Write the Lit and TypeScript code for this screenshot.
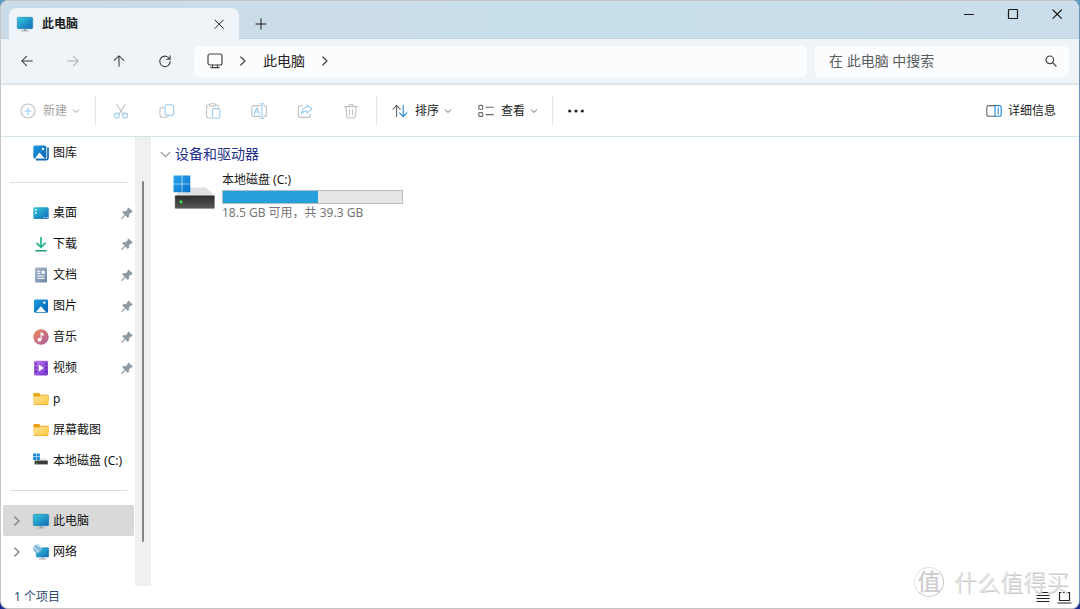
import { LitElement, html, svg, css, nothing } from "lit";
import { customElement, property, state } from "lit/decorators.js";
import { classMap } from "lit/directives/class-map.js";

const pc = svg`
  <rect x="0.3" y="1.3" width="15.4" height="11.4" rx="1.2" fill="url(#screen)" stroke="#1c7fae" stroke-width="0.6"/>
  <path d="M7 13h2v2H7z" fill="#9aa4ab"/><path d="M4.5 14.9h7" stroke="#9aa4ab" stroke-width="1"/>`;

const pictures: Record<string, unknown> = {
  pc,
  gallery: svg`
    <path d="M3 14.6h10.2a1.8 1.8 0 0 0 1.8-1.8V2.5" fill="none" stroke="#1468b3" stroke-width="1.7"/>
    <rect x="0.3" y="0.5" width="13" height="13" rx="1.5" fill="url(#sky)"/>
    <path d="M2 13.2 6.6 7.4 11.6 13.2z" fill="#fff"/><circle cx="10" cy="4" r="1.2" fill="#fff"/>`,
  desktop: svg`
    <rect x="0.3" y="2.3" width="15.4" height="11.6" rx="1.2" fill="url(#screen)"/>
    <path d="M2 4.3h1.6v1.5H2zM2 7.2h1.6v1.5H2z" fill="#fff"/>
    <path d="M10.5 12.6h1M12.3 12.6h1M14 12.6h1" stroke="#fff" stroke-width="0.8"/>`,
  download: svg`
    <path d="M8 1v10M3.4 6.8 8 11.4l4.6-4.6" fill="none" stroke="#26b394" stroke-width="1.7"/>
    <path d="M2.4 14.8h11.2" stroke="#1c9c84" stroke-width="1.6"/>`,
  document: svg`
    <rect x="2" y="0.6" width="12" height="14.8" rx="1.2" fill="url(#paper)"/>
    <path d="M4.4 4.3h3M4.4 6.4h3M4.4 9h7.4M4.4 11.4h7.4" stroke="#fff" stroke-width="1"/>
    <path d="M8.8 3.8h3v3h-3z" fill="#fff"/>`,
  image: svg`
    <rect x="1" y="1.4" width="14" height="13.4" rx="1.3" fill="url(#sky)"/>
    <path d="M3 14 7.8 8.2 13 14z" fill="#fff"/><circle cx="11.3" cy="4.6" r="1.2" fill="#fff"/>`,
  music: svg`
    <circle cx="8" cy="8" r="7.7" fill="url(#note)"/>
    <circle cx="6.5" cy="10.7" r="1.9" fill="#fff"/>
    <path d="M7.6 10.7V3.2l3 1.6v2.2L8.6 6v4.7z" fill="#fff"/>`,
  video: svg`
    <rect x="1" y="0.8" width="14" height="14.6" rx="1.3" fill="url(#film)"/>
    <path d="M2.8 3v11M13.2 3v11" stroke="#4e2391" stroke-width="1.6" stroke-dasharray="1.6 2.2"/>
    <path d="M5.8 4.6 11 8.1 5.8 11.6z" fill="#fff"/>`,
  folder: svg`
    <path d="M0.4 3.2a1.2 1.2 0 0 1 1.2-1.2h4.5l1.5 1.7h6.8a1.2 1.2 0 0 1 1.2 1.2v5H0.4z" fill="#e9a416"/>
    <path d="M0.4 5.4h6L7.8 4.6h6.6a1.2 1.2 0 0 1 1.2 1.2v6.8a1.3 1.3 0 0 1-1.3 1.3H1.7a1.3 1.3 0 0 1-1.3-1.3z" fill="url(#manila)"/>
    <path d="M0.8 13.6h14.4" stroke="#e6a829" stroke-width="0.7"/>`,
  drive: svg`
    <path d="M5 5.4h8l2 3H3z" fill="#e2e3e6"/>
    <path d="M1.6 7.6h13.2v3.8H1.6z" fill="#3b3b3b"/><path d="M3 9.4h1.4v1H3z" fill="#47e04c"/>
    <path d="M0.2 0.4h3v3h-3zM3.8 0.4h3v3h-3zM0.2 4h3v3h-3zM3.8 4h3v3h-3z" fill="#1585d8"/>`,
  network: svg`
    <rect x="3.3" y="3.8" width="12.4" height="9.2" rx="1" fill="url(#screen)" stroke="#1c7fae" stroke-width="0.6"/>
    <path d="M8.6 13.2h2v1.6h-2z" fill="#9aa4ab"/><path d="M6.2 15h6.8" stroke="#9aa4ab" stroke-width="1"/>
    <circle cx="4.4" cy="4.6" r="4.2" fill="#7fb8d8"/>
    <path d="M1.2 3.4C3 4 2.6 5.6 4 6.2s.4 2 1 2.2M4.6.6C4 2 5.6 2.6 6.6 2.2S7.4 4 8.4 4.2" fill="none" stroke="#d9edf6" stroke-width="1.1"/>`,
};

const glyphs: Record<string, unknown> = {
  back: svg`<path d="M14 8H2.2M7.4 2.6 2 8l5.4 5.4"/>`,
  forward: svg`<path d="M2 8h11.8M8.6 2.6 14 8l-5.4 5.4"/>`,
  up: svg`<path d="M8 14V2.2M2.6 7.4 8 2l5.4 5.4"/>`,
  refresh: svg`<path d="M13.3 5.6A6 6 0 1 0 14 8.4M13.8 2v4h-4"/>`,
  monitor: svg`<rect x="1" y="1" width="14" height="11" rx="2"/><path d="M5.5 12v2.4M10.5 12v2.4M3.8 14.6h8.4"/>`,
  right: svg`<path d="M5.8 4 10 8l-4.2 4"/>`,
  down: svg`<path d="M4.4 6.4 8 9.8l3.6-3.4"/>`,
  expand: svg`<path d="M1.6 4.8 8 11.2l6.4-6.4"/>`,
  close: svg`<path d="M4 4l8.4 8.4M12.4 4 4 12.4"/>`,
  plus: svg`<path d="M8 3v10M3 8h10"/>`,
  minimize: svg`<path d="M3.5 8.5h9"/>`,
  maximize: svg`<rect x="3.5" y="3.5" width="9" height="9" rx="0.6"/>`,
  search: svg`<circle cx="6.8" cy="6.8" r="3.8"/><path d="M9.6 9.6 13 13"/>`,
  create: svg`<circle cx="8" cy="8" r="7"/><path class="accent" d="M8 4.8v6.4M4.8 8h6.4"/>`,
  cut: svg`<path d="M3.6 1 10 11M12.4 1 6 11"/><circle class="accent" cx="3.9" cy="12.6" r="2.5"/><circle class="accent" cx="12.1" cy="12.6" r="2.5"/>`,
  copy: svg`<path d="M4.4 4.6H3a2 2 0 0 0-2 2v5.6a2 2 0 0 0 2 2h4.4a2 2 0 0 0 2-1.6"/><rect class="accent" x="6" y="1.8" width="8.6" height="10.4" rx="2"/>`,
  paste: svg`<path d="M6 15H3.2a1.6 1.6 0 0 1-1.6-1.6V3.6A1.6 1.6 0 0 1 3.2 2h1.3M10.5 2h1.3a1.6 1.6 0 0 1 1.6 1.6V4"/><rect x="4.5" y="0.8" width="6" height="2.4" rx="1.1"/><rect class="accent" x="7.4" y="5.6" width="7.4" height="9.6" rx="1.4"/>`,
  rename: svg`<path d="M9 2.6H2.8A2 2 0 0 0 .8 4.6v6.8a2 2 0 0 0 2 2H9M12.8 2.6h.6a2 2 0 0 1 2 2v6.8a2 2 0 0 1-2 2h-.6"/><path class="accent" d="M3.2 11 5.8 4.6 8.4 11M4.1 9h3.4M10.9 1v14M9.2.8h3.4M9.2 15.2h3.4"/>`,
  share: svg`<path d="M5.6 2.8H3.4a2 2 0 0 0-2 2v7.6a2 2 0 0 0 2 2h7.8a2 2 0 0 0 2-2v-1"/><path class="accent" d="M10 1.8 15 6l-5 4.2V7.8C7.4 7.8 5.8 8.8 4.6 10.6 4.8 6.8 6.8 4.4 10 4.2z"/>`,
  trash: svg`<path d="M1.4 3.6h13.2M5.8 3.4a2.2 2.2 0 0 1 4.4 0M2.8 3.8l.9 9.6a1.8 1.8 0 0 0 1.8 1.6h5a1.8 1.8 0 0 0 1.8-1.6l.9-9.6M6.5 6.8v5M9.5 6.8v5"/>`,
  sort: svg`<path d="M4.6 13.4V2.6M1 6.2l3.6-3.8 3.6 3.8"/><path class="accent" d="M11.2 2.4v11M7.6 9.8l3.6 3.8 3.6-3.8"/>`,
  view: svg`<rect x="0.8" y="2.4" width="4" height="3.8" rx="1"/><rect x="0.8" y="9.6" width="4" height="3.8" rx="1"/><path d="M8 4.2h7.4M8 11.6h7.4"/>`,
  details: svg`<path d="M9 2.6H2.8a2 2 0 0 0-2 2v6.6a2 2 0 0 0 2 2H9"/><path class="accent" d="M9 2.6h4.2a2 2 0 0 1 2 2v6.6a2 2 0 0 1-2 2H9zM12.2 5v1.4M12.2 7.4v1.2M12.2 9.6V11"/>`,
  more: svg`<g fill="currentColor" stroke="none"><circle cx="1.7" cy="8" r="1.6"/><circle cx="8" cy="8" r="1.6"/><circle cx="14.3" cy="8" r="1.6"/></g>`,
  pin: svg`<path d="M9.6 1.6 14.6 6.4l-1.2 1.1-1.2.1-2 2 .1 2.7-1.4 1.3-2.7-2.7-3.9 3.9-.9-.1.1-.9 3.8-3.9L2.6 7.2 4 5.8l2.6.1 2-2 .1-1.3z" fill="currentColor" stroke="none"/>`,
  rows: svg`<path d="M2 3.5h12M2 6.5h12M2 9.5h12M2 12.5h12"/>`,
  tiles: svg`<path d="M5 3.5H3.5v8h10v-8H12M7.5 3.5h2M2 14h13"/>`,
};

@customElement("ui-glyph")
class UiGlyph extends LitElement {
  @property() name = "";
  static styles = css`
    :host { display: flex; flex: none; width: 16px; height: 16px; }
    svg { width: 100%; height: 100%; overflow: visible; fill: none; stroke: currentColor;
      stroke-width: var(--stroke, 1); stroke-linecap: round; stroke-linejoin: round; }
    .accent { stroke: var(--accent, currentColor); }
  `;
  render() {
    return html`<svg viewBox="0 0 16 16" aria-hidden="true">${glyphs[this.name]}</svg>`;
  }
}

@customElement("ui-picture")
class UiPicture extends LitElement {
  @property() name = "";
  static styles = css`
    :host { display: flex; flex: none; width: 16px; height: 16px; }
    svg { width: 100%; height: 100%; overflow: visible; }
  `;
  render() {
    return html`<svg viewBox="0 0 16 16" aria-hidden="true">
      <defs>
        <linearGradient id="screen" x2="1" y2="1"><stop stop-color="#35cbdc"/><stop offset="1" stop-color="#1169b8"/></linearGradient>
        <linearGradient id="sky" x2="1" y2="1"><stop stop-color="#1b9ce0"/><stop offset="1" stop-color="#0c62b4"/></linearGradient>
        <linearGradient id="paper" x2="1" y2="1"><stop stop-color="#a9bace"/><stop offset="1" stop-color="#6a84a8"/></linearGradient>
        <linearGradient id="note" x2="1" y2="1"><stop stop-color="#ee8a5a"/><stop offset="1" stop-color="#a95b9f"/></linearGradient>
        <linearGradient id="film" x2="1" y2="1"><stop stop-color="#bd79ea"/><stop offset="1" stop-color="#7434cf"/></linearGradient>
        <linearGradient id="manila" x2="1" y2="1"><stop stop-color="#ffe59a"/><stop offset="1" stop-color="#fcc63c"/></linearGradient>
      </defs>
      ${pictures[this.name]}
    </svg>`;
  }
}

interface Place { name: string; icon: string; pinned?: boolean; expandable?: boolean; }

const groups: Place[][] = [
  [{ name: "图库", icon: "gallery" }],
  [
    { name: "桌面", icon: "desktop", pinned: true },
    { name: "下载", icon: "download", pinned: true },
    { name: "文档", icon: "document", pinned: true },
    { name: "图片", icon: "image", pinned: true },
    { name: "音乐", icon: "music", pinned: true },
    { name: "视频", icon: "video", pinned: true },
    { name: "p", icon: "folder" },
    { name: "屏幕截图", icon: "folder" },
    { name: "本地磁盘 (C:)", icon: "drive" },
  ],
  [
    { name: "此电脑", icon: "pc", expandable: true },
    { name: "网络", icon: "network", expandable: true },
  ],
];

@customElement("app-root")
class AppRoot extends LitElement {
  @state() private current = "此电脑";
  private drive = { name: "本地磁盘 (C:)", free: 18.5, total: 39.3 };

  static styles = css`
    :host {
      display: block; box-sizing: border-box; height: 100vh; overflow: hidden;
      font: 12px/16px "Noto Sans", "Noto Sans CJK SC", sans-serif;
      color: #1b1b1b;
      background: linear-gradient(#5a9cc4, #2f6ea8 40%, #1c2a8c 85%);
    }
    * { box-sizing: border-box; }
    button, input { font: inherit; color: inherit; border: 0; padding: 0; margin: 0; background: none; }
    .window {
      position: relative; display: flex; flex-direction: column; height: 100%;
      border: 1px solid #c3c5c7; border-right-color: #6f93b4; border-radius: 8px;
      overflow: hidden; background: #fff;
    }
    .titlebar {
      display: flex; flex: none; height: 38px; padding-left: 8px;
      background: linear-gradient(90deg, #cbdce8, #cbdde8 35%, #c6dfeb 48%, #c8dfeb 68%, #cbddea);
      box-shadow: inset 0 -1px #bcd3e0;
    }
    .tab {
      display: flex; align-items: center; width: 230px; height: 31px; margin-top: 7px;
      padding: 0 12px 0 8px; border-radius: 8px 8px 0 0; background: #eff4f8;
    }
    .tab-name { flex: 1; margin-left: 9px; text-align: left; font-weight: 700; }
    .new-tab { display: flex; align-self: flex-end; margin: 0 0 7px 14px; }
    .caption { display: flex; align-items: flex-start; margin-left: auto; padding-top: 5px; --stroke: 1.2; }
    .caption button { display: flex; justify-content: center; width: 44px; height: 24px; }
    .nav {
      display: flex; flex: none; align-items: center; height: 46px; padding: 0 10px 0 3px;
      background: #eff4f8; border-bottom: 2px solid #dfe6ea; --stroke: 1.2;
    }
    .nav-button { display: flex; justify-content: center; width: 46px; color: #3a3a3a; }
    .nav-button ui-glyph { width: 14px; height: 14px; }
    .nav-button:disabled { color: #a9adb0; }
    .field { display: flex; align-items: center; height: 31px; border-radius: 5px; background: #fbfcfe; font-size: 14px; line-height: 20px; }
    .address { flex: 1; gap: 12px; margin: 0 8px 0 6px; padding-left: 13px; color: #222; }
    .address button { display: flex; }
    .address ui-glyph { color: #444; }
    .search { flex: 0 1 254px; padding: 0 10px 0 14px; color: #444; }
    .search input { flex: 1; min-width: 0; outline: 0; }
    .search input::placeholder { color: #5a5c5e; opacity: 1; }
    .toolbar {
      display: flex; flex: none; align-items: center; height: 52px; padding: 0 23px 0 19px;
      border-bottom: 1px solid #d3e3ea; --accent: #1e88dc; --stroke: 1.1;
    }
    .toolbar button { display: flex; align-items: center; gap: 7px; }
    .toolbar button:disabled { color: #a4a4a4; --accent: #9ccbf0; }
    .toolbar .chevron { width: 12px; height: 12px; color: #9a9a9a; margin-left: -4px; --stroke: 1.4; }
    .toolbar button:disabled ui-glyph { color: #c0c0c0; }
    .toolbar .tool { justify-content: center; width: 46px; }
    .toolbar .menu { margin-right: 24px; }
    .toolbar .new { margin-right: 13px; }
    .toolbar .glyph { color: #666; }
    .toolbar .last { margin-right: 12px; }
    .tools { display: flex; margin: 0 2px; }
    .rule { width: 1px; height: 30px; background: #e6e6e6; }
    .toolbar .first-menu { margin-left: 15px; }
    .toolbar .more { margin-left: 15px; color: #222; }
    .toolbar .details { margin-left: auto; gap: 6px; }
    .body { display: flex; flex: 1; min-height: 0; }
    .sidebar { width: 134px; overflow: hidden; }
    .group + .group { margin-top: 14px; padding-top: 15px; background: linear-gradient(#dedede, #dedede) 9px 0 / 117px 1px no-repeat; }
    .place {
      display: flex; align-items: center; width: 131px; height: 31px; margin-left: 2px;
      padding-left: 6px; border-radius: 2px; color: #111; text-decoration: none; white-space: nowrap;
    }
    .place.selected { background: #d9d9d9; }
    .twist { width: 24px; display: flex; color: #858585; --stroke: 1.5; }
    .place-name { flex: 1; margin-left: 4px; }
    .pin { width: 14px; height: 14px; color: #8e9aa2; }
    .scroll { display: flex; justify-content: center; width: 16px; padding: 44px 0; background: #f0f0f0; }
    .thumb { width: 2px; border-radius: 1px; background: #858585; }
    .content { flex: 1; min-width: 0; padding: 7px 9px; }
    .heading { display: flex; align-items: center; margin: 0; font-size: 14px; line-height: 20px; font-weight: 400; color: #22318c; }
    .heading button { display: flex; align-items: center; gap: 4px; }
    .heading ui-glyph { width: 11px; height: 11px; color: #888; --stroke: 1.5; }
    .drive { display: flex; gap: 7px; margin: 8px 0 0 13px; }
    .drive-picture { flex: none; width: 42px; height: 34px; margin-top: 3px; }
    .drive-info { width: 181px; white-space: nowrap; }
    .bar { height: 14px; margin: 2px 0 1px; border: 1px solid #bcbcbc; background: #e6e6e6; }
    .used { height: 100%; background: #26a0da; }
    .free { color: #757575; }
    .status { display: flex; flex: none; align-items: center; height: 22px; padding: 0 7px 0 13px; color: #2d4a70; }
    .modes { display: flex; gap: 5px; margin-left: auto; color: #222; --stroke: 1.2; }
    .modes button { display: flex; }
    .watermark {
      position: absolute; right: 10px; bottom: 9px; display: flex; align-items: center; gap: 10px;
      color: #e2e2e2; font-size: 23px; line-height: 34px; text-shadow: 1px 1px #cbcbcb; pointer-events: none; font-weight: 300;
    }
    .seal {
      width: 30px; height: 30px; border: 1px solid #e2e2e2; border-right-color: #c6c6c6; border-bottom-color: #c6c6c6;
      border-radius: 50%; text-align: center; line-height: 26px; font-weight: 500; color: #cfcfcf; text-shadow: none;
    }
  `;

  private place(p: Place) {
    return html`<a href="#" class=${classMap({ place: true, selected: p.name === this.current })}
      @click=${(e: Event) => { e.preventDefault(); this.current = p.name; }}>
      <span class="twist">${p.expandable ? html`<ui-glyph name="right"></ui-glyph>` : nothing}</span>
      <ui-picture name=${p.icon}></ui-picture>
      <span class="place-name">${p.name}</span>
      ${p.pinned ? html`<ui-glyph class="pin" name="pin"></ui-glyph>` : nothing}
    </a>`;
  }

  render() {
    const d = this.drive;
    const used = Math.round((1 - d.free / d.total) * 100);
    const tools = [["cut", "剪切"], ["copy", "复制"], ["paste", "粘贴"], ["rename", "重命名"], ["share", "共享"], ["trash", "删除"]];
    return html`<div class="window">
      <header class="titlebar">
        <div class="tab">
          <ui-picture name="pc"></ui-picture>
          <button class="tab-name">此电脑</button>
          <button aria-label="关闭标签页"><ui-glyph name="close"></ui-glyph></button>
        </div>
        <button class="new-tab" aria-label="新标签页"><ui-glyph name="plus"></ui-glyph></button>
        <div class="caption">
          <button aria-label="最小化"><ui-glyph name="minimize"></ui-glyph></button>
          <button aria-label="最大化"><ui-glyph name="maximize"></ui-glyph></button>
          <button aria-label="关闭"><ui-glyph name="close"></ui-glyph></button>
        </div>
      </header>
      <nav class="nav">
        <button class="nav-button" aria-label="后退"><ui-glyph name="back"></ui-glyph></button>
        <button class="nav-button" aria-label="前进" disabled><ui-glyph name="forward"></ui-glyph></button>
        <button class="nav-button" aria-label="向上"><ui-glyph name="up"></ui-glyph></button>
        <button class="nav-button" aria-label="刷新"><ui-glyph name="refresh"></ui-glyph></button>
        <div class="field address">
          <button aria-label="位置"><ui-glyph name="monitor"></ui-glyph></button>
          <ui-glyph name="right"></ui-glyph>
          <button>此电脑</button>
          <ui-glyph name="right"></ui-glyph>
        </div>
        <label class="field search">
          <input type="text" aria-label="搜索" placeholder="在 此电脑 中搜索">
          <ui-glyph name="search"></ui-glyph>
        </label>
      </nav>
      <div class="toolbar" role="toolbar">
        <button class="new" disabled><ui-glyph name="create"></ui-glyph>新建<ui-glyph class="chevron" name="down"></ui-glyph></button>
        <span class="rule"></span>
        <div class="tools">
          ${tools.map(([icon, label]) => html`<button class="tool" aria-label=${label} disabled><ui-glyph name=${icon}></ui-glyph></button>`)}
        </div>
        <span class="rule"></span>
        <button class="menu first-menu"><ui-glyph class="glyph" name="sort"></ui-glyph>排序<ui-glyph class="chevron" name="down"></ui-glyph></button>
        <button class="last"><ui-glyph class="glyph" name="view"></ui-glyph>查看<ui-glyph class="chevron" name="down"></ui-glyph></button>
        <span class="rule"></span>
        <button class="more" aria-label="更多"><ui-glyph name="more"></ui-glyph></button>
        <button class="details"><ui-glyph class="glyph" name="details"></ui-glyph>详细信息</button>
      </div>
      <div class="body">
        <aside class="sidebar">
          ${groups.map((g) => html`<div class="group">${g.map((p) => this.place(p))}</div>`)}
        </aside>
        <div class="scroll"><div class="thumb"></div></div>
        <main class="content">
          <h2 class="heading"><button><ui-glyph name="expand"></ui-glyph>设备和驱动器</button></h2>
          <div class="drive">
            <svg class="drive-picture" viewBox="0 0 42 34" aria-hidden="true">
              <defs>
                <linearGradient id="case" x2="0" y2="1"><stop stop-color="#2c2c2c"/><stop offset="1" stop-color="#585858"/></linearGradient>
                <linearGradient id="flag" x2="1" y2="1"><stop stop-color="#2aa5ea"/><stop offset="1" stop-color="#0a72cf"/></linearGradient>
              </defs>
              <path d="M10 12.4h23l8.6 8.6H2z" fill="#dfe0e3"/>
              <rect x="2" y="20.5" width="39.6" height="13" rx="0.8" fill="url(#case)" stroke="#8a8a8a" stroke-width="0.5"/>
              <circle cx="8" cy="26.8" r="1.6" fill="#3fe04a"/>
              <path d="M0.5 0.5h8.2v8.2H0.5zM9.3 0.5h8v8.2h-8zM0.5 9.3h8.2v8H0.5zM9.3 9.3h8v8h-8z" fill="url(#flag)"/>
            </svg>
            <div class="drive-info">
              <div>${d.name}</div>
              <div class="bar" role="meter" aria-label="已用空间" aria-valuemin="0" aria-valuemax="100" aria-valuenow=${used}>
                <div class="used" style="width:${used}%"></div>
              </div>
              <div class="free">${d.free} GB 可用，共 ${d.total} GB</div>
            </div>
          </div>
        </main>
      </div>
      <div class="watermark"><span class="seal">值</span><span>什么值得买</span></div>
      <footer class="status">
        <span>1 个项目</span>
        <div class="modes">
          <button aria-label="列表"><ui-glyph name="rows"></ui-glyph></button>
          <button aria-label="大图标"><ui-glyph name="tiles"></ui-glyph></button>
        </div>
      </footer>
    </div>`;
  }
}
